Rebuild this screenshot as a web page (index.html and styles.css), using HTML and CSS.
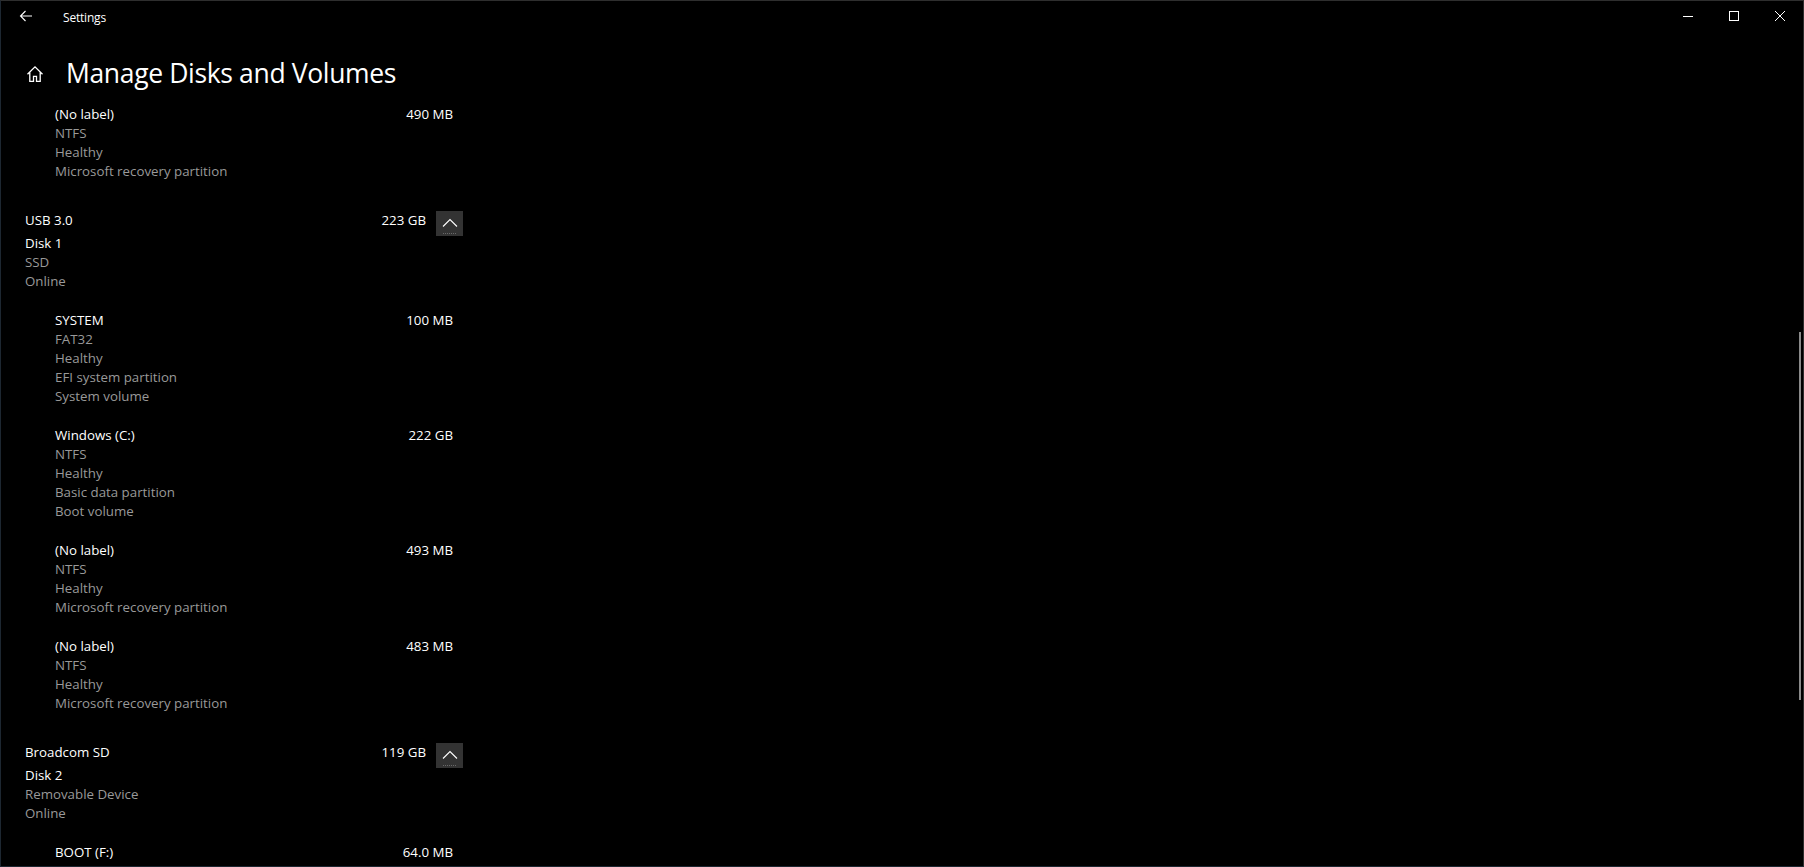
FILE: index.html
```html
<!DOCTYPE html>
<html lang="en">
<head>
<meta charset="utf-8">
<title>Settings</title>
<link rel="stylesheet" href="styles.css">
</head>
<body>
<div class="window">
  <div class="titlebar">
    <div class="back">
      <svg width="14" height="12" viewBox="0 0 14 12"><path d="M13 6H1.5M6.5 1L1.5 6l5 5" fill="none" stroke="#fff" stroke-width="1.1"/></svg>
    </div>
    <div class="app-name">Settings</div>
    <div class="controls">
      <div class="ctl"><svg width="12" height="12" viewBox="0 0 12 12"><path d="M1 6.5h10" stroke="#fff" stroke-width="1"/></svg></div>
      <div class="ctl"><svg width="12" height="12" viewBox="0 0 12 12"><rect x="1.5" y="1.5" width="9" height="9" fill="none" stroke="#fff" stroke-width="1"/></svg></div>
      <div class="ctl"><svg width="12" height="12" viewBox="0 0 12 12"><path d="M1 1l10 10M11 1L1 11" stroke="#fff" stroke-width="1"/></svg></div>
    </div>
  </div>

  <div class="page-header">
    <div class="home">
      <svg width="18" height="18" viewBox="0 0 18 18"><path d="M1.5 9.2L9 1.8l7.5 7.4M3.8 7v9.3h3.7v-5h3v5h3.7V7" fill="none" stroke="#fff" stroke-width="1.3" stroke-linejoin="miter"/></svg>
    </div>
    <h1 class="title">Manage Disks and Volumes</h1>
  </div>

  <div class="list">
    <div class="disk">
      <div class="part">
        <div class="row"><span class="pri">(No label)</span><span class="pri">490 MB</span></div>
        <div class="sec">NTFS</div>
        <div class="sec">Healthy</div>
        <div class="sec">Microsoft recovery partition</div>
      </div>
    </div>

    <div class="disk">
      <div class="disk-head">
        <span class="pri name">USB 3.0</span>
        <span class="pri size">223 GB</span>
        <span class="toggle"><svg width="16" height="10" viewBox="0 0 16 10"><path d="M1 8.5L8 1.5l7 7" fill="none" stroke="#fff" stroke-width="1.1"/></svg></span>
      </div>
      <div class="pri">Disk 1</div>
      <div class="sec">SSD</div>
      <div class="sec disk-last">Online</div>

      <div class="part">
        <div class="row"><span class="pri">SYSTEM</span><span class="pri">100 MB</span></div>
        <div class="sec">FAT32</div>
        <div class="sec">Healthy</div>
        <div class="sec">EFI system partition</div>
        <div class="sec">System volume</div>
      </div>
      <div class="part">
        <div class="row"><span class="pri">Windows (C:)</span><span class="pri">222 GB</span></div>
        <div class="sec">NTFS</div>
        <div class="sec">Healthy</div>
        <div class="sec">Basic data partition</div>
        <div class="sec">Boot volume</div>
      </div>
      <div class="part">
        <div class="row"><span class="pri">(No label)</span><span class="pri">493 MB</span></div>
        <div class="sec">NTFS</div>
        <div class="sec">Healthy</div>
        <div class="sec">Microsoft recovery partition</div>
      </div>
      <div class="part">
        <div class="row"><span class="pri">(No label)</span><span class="pri">483 MB</span></div>
        <div class="sec">NTFS</div>
        <div class="sec">Healthy</div>
        <div class="sec">Microsoft recovery partition</div>
      </div>
    </div>

    <div class="disk">
      <div class="disk-head">
        <span class="pri name">Broadcom SD</span>
        <span class="pri size">119 GB</span>
        <span class="toggle"><svg width="16" height="10" viewBox="0 0 16 10"><path d="M1 8.5L8 1.5l7 7" fill="none" stroke="#fff" stroke-width="1.1"/></svg></span>
      </div>
      <div class="pri">Disk 2</div>
      <div class="sec">Removable Device</div>
      <div class="sec disk-last">Online</div>

      <div class="part">
        <div class="row"><span class="pri">BOOT (F:)</span><span class="pri">64.0 MB</span></div>
      </div>
    </div>
  </div>

  <div class="scrollbar"></div>
</div>
</body>
</html>
```

FILE: styles.css
```css
* { box-sizing: border-box; }
html, body {
  margin: 0;
  padding: 0;
  background: #000;
}
body {
  font-family: "Open Sans", "Noto Sans", sans-serif;
  color: #fff;
  overflow: hidden;
}
.window {
  position: relative;
  width: 1804px;
  height: 867px;
  background: #000;
  border: 1px solid #1d2731;
  border-top-color: #2e2e2e;
  border-right-color: #2e2e2e;
  overflow: hidden;
}
.titlebar {
  display: flex;
  align-items: center;
  height: 31px;
}
.back {
  width: 49px;
  height: 31px;
  display: flex;
  align-items: center;
  justify-content: center;
  padding-bottom: 2px;
}
.app-name {
  margin-left: 13px;
  font-size: 12px;
  letter-spacing: -0.2px;
  padding-top: 1px;
}
.controls {
  margin-left: auto;
  display: flex;
  height: 31px;
}
.ctl {
  width: 46px;
  height: 31px;
  display: flex;
  align-items: center;
  justify-content: center;
  padding-bottom: 2px;
}
.page-header {
  display: flex;
  align-items: center;
  height: 40px;
  margin-top: 21px;
}
.home {
  width: 65px;
  display: flex;
  justify-content: center;
  padding-left: 3px;
  padding-top: 1px;
}
.title {
  margin: 0;
  font-weight: 400;
  font-size: 26.5px;
  letter-spacing: -0.35px;
  line-height: 40px;
}
.list {
  margin-top: 11.5px;
  padding-left: 24px;
  width: 462px;
  font-size: 13.3px;
  line-height: 19px;
}
.disk {
  padding-bottom: 10px;
}
.disk-head {
  display: flex;
  align-items: flex-start;
  height: 23px;
}
.disk-head .size {
  margin-left: auto;
}
.toggle {
  width: 27px;
  height: 25px;
  margin-left: 10px;
  background: #333;
  display: flex;
  align-items: center;
  justify-content: center;
  position: relative;
}
.toggle::after {
  content: "";
  position: absolute;
  left: 7px;
  right: 7px;
  bottom: 2px;
  border-bottom: 1px dotted #6a6a6a;
}
.disk-last {
  margin-bottom: 20px;
}
.part {
  margin-left: 30px;
  margin-right: 10px;
  margin-bottom: 20px;
}
.row {
  display: flex;
  justify-content: space-between;
}
.pri { color: #fff; }
.sec { color: #999; }
.scrollbar {
  position: absolute;
  right: 2px;
  top: 331px;
  width: 2px;
  height: 368px;
  background: #8a8a8a;
}
```
